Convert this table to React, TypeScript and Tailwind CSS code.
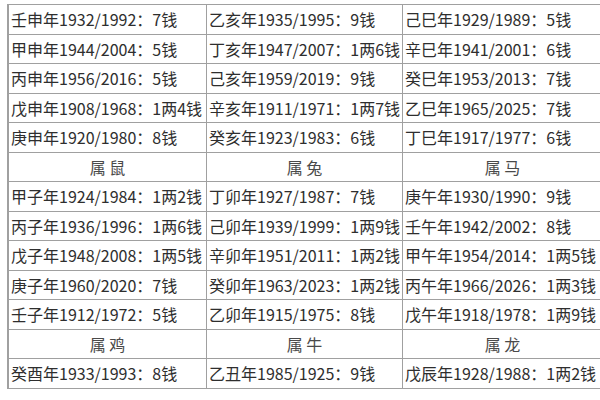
const cols: string[][] = [
  [
    '壬申年1932/1992：7钱',
    '甲申年1944/2004：5钱',
    '丙申年1956/2016：5钱',
    '戊申年1908/1968：1两4钱',
    '庚申年1920/1980：8钱',
    '#属 鼠',
    '甲子年1924/1984：1两2钱',
    '丙子年1936/1996：1两6钱',
    '戊子年1948/2008：1两5钱',
    '庚子年1960/2020：7钱',
    '壬子年1912/1972：5钱',
    '#属 鸡',
    '癸酉年1933/1993：8钱',
  ],
  [
    '乙亥年1935/1995：9钱',
    '丁亥年1947/2007：1两6钱',
    '己亥年1959/2019：9钱',
    '辛亥年1911/1971：1两7钱',
    '癸亥年1923/1983：6钱',
    '#属 兔',
    '丁卯年1927/1987：7钱',
    '己卯年1939/1999：1两9钱',
    '辛卯年1951/2011：1两2钱',
    '癸卯年1963/2023：1两2钱',
    '乙卯年1915/1975：8钱',
    '#属 牛',
    '乙丑年1985/1925：9钱',
  ],
  [
    '己巳年1929/1989：5钱',
    '辛巳年1941/2001：6钱',
    '癸巳年1953/2013：7钱',
    '乙巳年1965/2025：7钱',
    '丁巳年1917/1977：6钱',
    '#属 马',
    '庚午年1930/1990：9钱',
    '壬午年1942/2002：8钱',
    '甲午年1954/2014：1两5钱',
    '丙午年1966/2026：1两3钱',
    '戊午年1918/1978：1两9钱',
    '#属 龙',
    '戊辰年1928/1988：1两2钱',
  ],
];

function Cell({ text }: { text: string }) {
  if (text.startsWith('#')) {
    return (
      <div className="h-[29.5px] border-b border-r border-[#a0a0a0] flex items-center justify-center text-[#4a4a4a] whitespace-pre">
        {text.slice(1)}
      </div>
    );
  }
  return (
    <div className="h-[29.5px] border-b border-r border-[#a0a0a0] flex items-center pl-[2px] whitespace-nowrap text-[#2e2e2e]">
      {text}
    </div>
  );
}

export default function App() {
  return (
    <div
      className="w-[600px] h-[400px] overflow-hidden bg-white pt-[4px] pl-[7px] text-[16px] leading-none"
      style={{ fontFamily: '"Noto Sans CJK SC", "Noto Sans", sans-serif' }}
    >
      <div className="grid grid-cols-[198px_196px_200px] border-t border-l-2 border-[#a0a0a0] w-[596px]">
        {cols[0].map((_, i) =>
          cols.map((c, j) => <Cell key={`${i}-${j}`} text={c[i]} />)
        )}
      </div>
    </div>
  );
}
